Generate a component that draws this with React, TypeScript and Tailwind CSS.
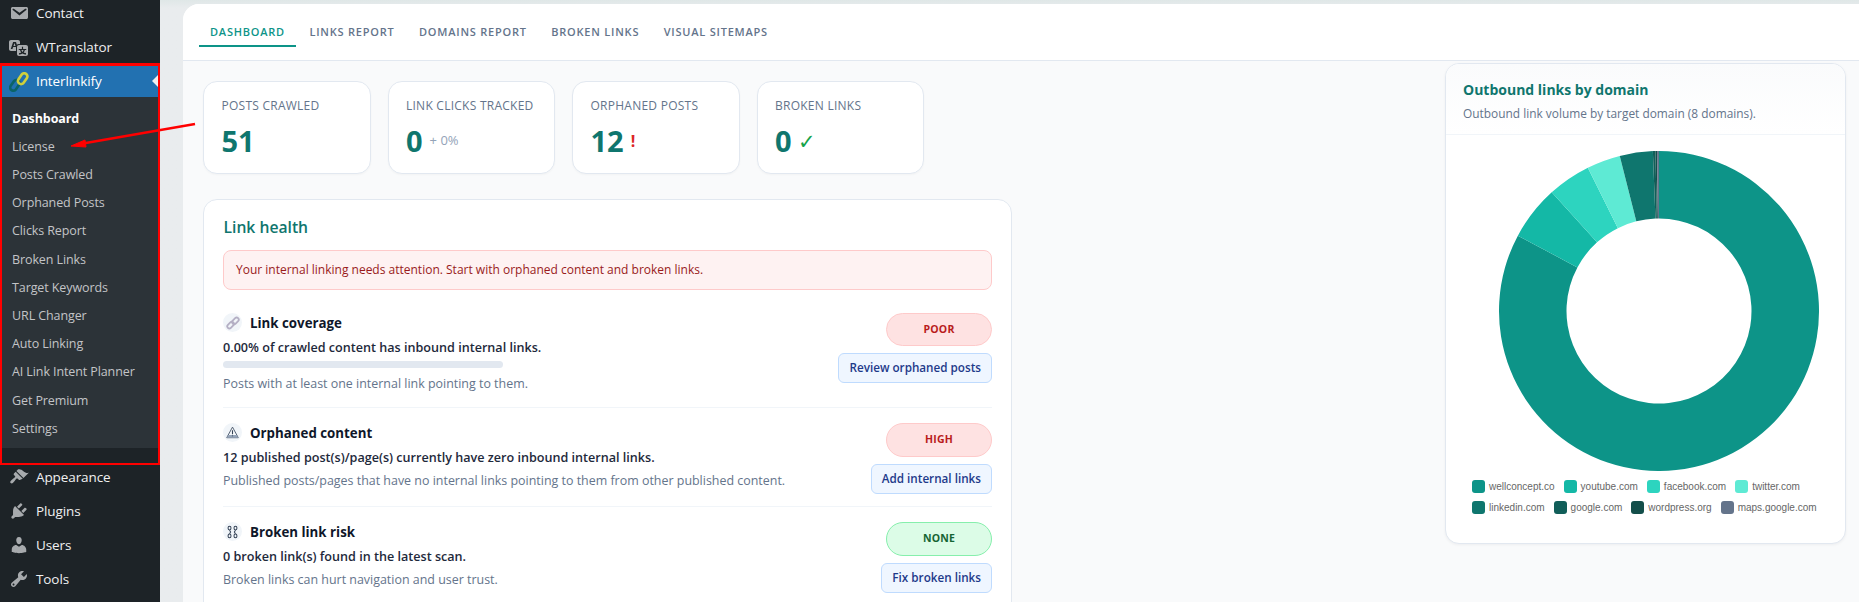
import React from "react";

const FONT = '"Open Sans","Noto Sans",sans-serif';

const Dash = ({ d, className = "" }: { d: string; className?: string }) => (
  <svg viewBox="0 0 20 20" width="20" height="20" className={"fill-[#a7aaad] " + className}>
    <path d={d} />
  </svg>
);

const ICONS = {
  mail: "M3.87 4h13.25C18.37 4 19 4.59 19 5.79v8.42c0 1.19-.63 1.79-1.88 1.79H3.87c-1.25 0-1.88-.6-1.88-1.79V5.79c0-1.2.63-1.79 1.88-1.79zm6.62 8.6l6.74-5.53c.24-.2.43-.66.13-1.07-.29-.41-.82-.42-1.17-.17l-5.7 3.86L4.8 5.83c-.35-.25-.88-.24-1.17.17-.3.41-.11.87.13 1.07z",
  translate: "M11 7H9.49c-.63 0-1.25.3-1.59.7L7 5H4.13l-2.39 7h1.69l.74-2H7v4H2c-1.1 0-2-.9-2-2V5c0-1.1.9-2 2-2h7c1.1 0 2 .9 2 2v2zM6.51 9H4.49l1-2.93zM10 8h7c1.1 0 2 .9 2 2v7c0 1.1-.9 2-2 2h-7c-1.1 0-2-.9-2-2v-7c0-1.1.9-2 2-2zm7.25 5v-1.08h-3.17V9.75h-1.16v2.17H9.75V13h1.28c.11.85.56 1.85 1.28 2.62-.87.36-1.89.62-2.31.62-.01.02.22.97.2 1.46.84 0 2.21-.5 3.28-1.15 1.09.65 2.48 1.15 3.34 1.15-.02-.49.2-1.44.2-1.46-.43 0-1.49-.26-2.38-.63.7-.77 1.14-1.77 1.25-2.61h1.36zm-3.81 1.93c-.5-.46-.85-1.13-1.01-1.93h2.09c-.17.8-.51 1.47-1 1.93l-.04.03s-.03-.02-.04-.03z",
  brush: "M14.48 11.06L7.41 3.99l1.5-1.5c.5-.56 2.3-.47 3.51.32 1.21.8 1.43 1.28 2.91 2.1 1.18.64 2.45 1.26 4.45.85zm-.71.71L6.7 4.7 4.93 6.47c-.39.39-.39 1.02 0 1.41l1.06 1.06c.39.39.39 1.03 0 1.42-.6.6-1.43 1.11-2.21 1.7-.79.59-1.48 1.23-2.08 1.82-.59.59-.59 1.54 0 2.12.59.59 1.54.59 2.12 0 .6-.6 1.23-1.3 1.82-2.08.59-.78 1.1-1.61 1.7-2.21.39-.39 1.03-.39 1.42 0l1.06 1.06c.39.39 1.02.39 1.41 0z",
  plug: "M13.11 4.36L9.87 7.6 8 5.73l3.24-3.24c.35-.34 1.05-.2 1.56.32.52.51.66 1.21.31 1.55zm-8 1.77l.91-1.12 9.01 9.01-1.19.84c-.71.71-2.63 1.16-3.82 1.16H6.14L4.9 17.26c-.59.59-1.54.59-2.12 0-.59-.58-.59-1.53 0-2.12l1.24-1.24v-3.88c0-1.13.4-3.19 1.09-3.89zm7.26 3.97l3.24-3.24c.34-.35 1.04-.21 1.55.31.52.51.66 1.21.31 1.55l-3.24 3.25z",
  user: "M10 9.25c-2.27 0-2.73-3.44-2.73-3.44C7 4.02 7.82 2 9.97 2c2.16 0 2.98 2.02 2.71 3.81 0 0-.41 3.44-2.68 3.44zm0 2.57L12.72 10c2.39 0 4.52 2.33 4.52 4.53v2.49s-3.65 1.13-7.24 1.13c-3.65 0-7.24-1.13-7.24-1.13v-2.49c0-2.25 1.94-4.48 4.47-4.48z",
  tools: "M16.68 9.77c-1.34 1.34-3.3 1.67-4.95.99l-5.41 6.52c-.99.99-2.59.99-3.58 0s-.99-2.59 0-3.57l6.52-5.42c-.68-1.65-.35-3.61.99-4.95 1.28-1.28 3.12-1.62 4.72-1.06l-2.89 2.89 2.82 2.82 2.86-2.87c.53 1.58.18 3.39-1.08 4.65zM3.81 16.21c.4.39 1.04.39 1.43 0 .4-.4.4-1.04 0-1.43-.39-.4-1.03-.4-1.43 0-.39.39-.39 1.03 0 1.43z",
};

const NavItem = ({ icon, label }: { icon: string; label: string }) => (
  <div className="flex h-[34px] items-center">
    <div className="flex w-[36px] justify-center pl-[1px]">
      <Dash d={icon} />
    </div>
    <span className="text-[13.5px] tracking-[-0.1px] text-[#f0f0f1]">{label}</span>
  </div>
);

const SUB = ["Dashboard","License","Posts Crawled","Orphaned Posts","Clicks Report","Broken Links","Target Keywords","URL Changer","Auto Linking","AI Link Intent Planner","Get Premium","Settings"];

const Sidebar = () => (
  <aside className="relative z-10 flex h-[602px] w-[160px] shrink-0 flex-col overflow-hidden bg-[#1d2327]">
    <div className="-mt-[4px]">
      <NavItem icon={ICONS.mail} label="Contact" />
      <NavItem icon={ICONS.translate} label="WTranslator" />
    </div>
    <div className="mt-[-1px] flex h-[402px] shrink-0 flex-col border-[2px] border-t-[3px] border-[#ff0000]">
      <div className="relative flex h-[31px] items-center bg-[#2271b1]">
        <div className="flex w-[34px] justify-center">
          <svg viewBox="0 0 18 18" width="20" height="20">
            <g fill="none" strokeWidth="2.4">
              <rect x="0" y="9.2" width="10.6" height="5.6" rx="2.8" transform="rotate(-55 5.3 12)" stroke="#0b6467" />
              <rect x="7" y="3.2" width="10.6" height="5.6" rx="2.8" transform="rotate(-55 12.3 6)" stroke="#cfd03c" />
            </g>
          </svg>
        </div>
        <span className="text-[13.5px] tracking-[-0.1px] text-white">Interlinkify</span>
        <div className="absolute right-0 top-[9px] h-0 w-0 border-y-[6px] border-r-[6px] border-y-transparent border-r-[#f0f0f1]" />
      </div>
      <div className="flex h-[351px] flex-col bg-[#2c3338] pt-[8px]">
        {SUB.map((s, i) => (
          <div key={s} className={"flex h-[28.2px] items-center pl-[10px] text-[12.5px] tracking-[-0.1px] " + (i === 0 ? "font-bold text-white" : "text-[#c3c4c7]")}>
            {s}
          </div>
        ))}
      </div>
    </div>
    <div className="-mt-[5px]">
      <NavItem icon={ICONS.brush} label="Appearance" />
      <NavItem icon={ICONS.plug} label="Plugins" />
      <NavItem icon={ICONS.user} label="Users" />
      <NavItem icon={ICONS.tools} label="Tools" />
    </div>
  </aside>
);

const TABS = ["DASHBOARD","LINKS REPORT","DOMAINS REPORT","BROKEN LINKS","VISUAL SITEMAPS"];

const Stat = ({ label, value, extra }: { label: string; value: string; extra?: React.ReactNode }) => (
  <div className="h-[93px] w-[167.5px] rounded-[14px] border border-[#e2e8f0] bg-white pl-[17.5px] pt-[15px] shadow-[0_1px_2px_rgba(15,23,42,0.03)]">
    <div className="text-[12px] leading-[18px] tracking-[0.25px] text-[#64748b]">{label}</div>
    <div className="mt-[8px] flex items-center gap-[6px]">
      <span className="text-[29px] font-bold leading-[36px] text-[#0f766e]">{value}</span>
      {extra}
    </div>
  </div>
);

const LinkIcon = () => (
  <svg viewBox="0 0 14 14" width="14" height="14" fill="none" stroke="#b4afc4" strokeWidth="1.8">
    <rect x="0.8" y="7" width="7.6" height="4.2" rx="2.1" transform="rotate(-45 4.6 9.1)" />
    <rect x="5.6" y="2.8" width="7.6" height="4.2" rx="2.1" transform="rotate(-45 9.4 4.9)" />
  </svg>
);
const WarnIcon = () => (
  <svg viewBox="0 0 14 14" width="13" height="13">
    <path d="M7 1.2 13.2 12.6H.8Z" fill="#f8fafc" stroke="#475569" strokeWidth="1" strokeLinejoin="round" />
    <path d="M.8 12.6 2.6 9.8H11.4L13.2 12.6Z" fill="#94a3b8" />
    <path d="M7 4.6V9M7 10.1V11" stroke="#334155" strokeWidth="1.2" />
  </svg>
);
const ChainIcon = () => (
  <svg viewBox="0 0 14 14" width="13" height="14" fill="none" stroke="#334155" strokeWidth="1.1">
    <ellipse cx="3.8" cy="2.8" rx="1.6" ry="2" />
    <ellipse cx="10.2" cy="2.8" rx="1.6" ry="2" />
    <path d="M3.8 5 5 7 3.8 9M10.2 5 9 7l1.2 2" />
    <ellipse cx="3.8" cy="11.2" rx="1.6" ry="2" />
    <ellipse cx="10.2" cy="11.2" rx="1.6" ry="2" />
  </svg>
);

type Row = {
  icon: React.ReactNode; title: string; text: string; sub: string; pill: string; btn: string;
  tone: "red" | "green"; bar?: boolean; pillH: string; rowH: string;
};

const ROWS: Row[] = [
  { icon: <LinkIcon />, title: "Link coverage", text: "0.00% of crawled content has inbound internal links.", sub: "Posts with at least one internal link pointing to them.", pill: "POOR", btn: "Review orphaned posts", tone: "red", bar: true, pillH: "h-[33px]", rowH: "h-[110px]" },
  { icon: <WarnIcon />, title: "Orphaned content", text: "12 published post(s)/page(s) currently have zero inbound internal links.", sub: "Published posts/pages that have no internal links pointing to them from other published content.", pill: "HIGH", btn: "Add internal links", tone: "red", pillH: "h-[34px]", rowH: "h-[99px]" },
  { icon: <ChainIcon />, title: "Broken link risk", text: "0 broken link(s) found in the latest scan.", sub: "Broken links can hurt navigation and user trust.", pill: "NONE", btn: "Fix broken links", tone: "green", pillH: "h-[34px]", rowH: "h-[99px]" },
];

const HealthRow = ({ r, last }: { r: Row; last: boolean }) => (
  <div className={"flex justify-between pt-[15px] " + (last ? "" : "border-b border-[#f1f5f9] ") + r.rowH}>
    <div className="min-w-0">
      <div className="flex h-[19px] items-center gap-[8px]">
        <span className="flex h-[19px] w-[19px] items-center justify-center rounded-full bg-[#f1f5f9]">{r.icon}</span>
        <span className="text-[13.3px] font-bold leading-[18px] text-[#0f172a]">{r.title}</span>
      </div>
      <div className="mt-[7px] text-[12.6px] font-semibold leading-[18px] text-[#1e293b]">{r.text}</div>
      {r.bar && <div className="mt-[4px] h-[7px] w-[280px] rounded-full bg-[#e2e8f0]" />}
      <div className={(r.bar ? "mt-[7px]" : "mt-[5px]") + " text-[12.45px] leading-[18px] text-[#64748b]"}>{r.sub}</div>
    </div>
    <div className="flex flex-col items-end gap-[7px]">
      <div className={"flex w-[106px] items-center justify-center rounded-full border text-[10.5px] font-bold tracking-[0.2px] " + r.pillH + " " + (r.tone === "red" ? "border-[#fecaca] bg-[#fee2e2] text-[#b91c1c]" : "border-[#86efac] bg-[#dcfce7] text-[#166534]")}>
        {r.pill}
      </div>
      <div className="flex h-[30px] items-center rounded-[6px] border border-[#bfdbfe] bg-[#eff6ff] px-[10px] text-[11.7px] font-semibold text-[#1e3a8a]">
        {r.btn}
      </div>
    </div>
  </div>
);

const SEGS = [
  { c: "#0d9488", from: 0, to: 298.1 },
  { c: "#14b8a6", from: 298.1, to: 317.9 },
  { c: "#2dd4bf", from: 317.9, to: 333.6 },
  { c: "#5eead4", from: 333.6, to: 345.8 },
  { c: "#0f766e", from: 345.8, to: 357.8 },
  { c: "#115e59", from: 357.8, to: 358.7 },
  { c: "#134e4a", from: 358.7, to: 359.3 },
  { c: "#64748b", from: 359.3, to: 360 },
];

const arc = (a0: number, a1: number) => {
  const R = 160, r = 92.5;
  const p = (rad: number, a: number) => {
    const t = ((a - 90) * Math.PI) / 180;
    return `${(rad * Math.cos(t)).toFixed(2)} ${(rad * Math.sin(t)).toFixed(2)}`;
  };
  const large = a1 - a0 > 180 ? 1 : 0;
  return `M${p(R, a0)}A${R} ${R} 0 ${large} 1 ${p(R, a1)}L${p(r, a1)}A${r} ${r} 0 ${large} 0 ${p(r, a0)}Z`;
};

const LEGEND = [
  [["wellconcept.co", "#0d9488"], ["youtube.com", "#14b8a6"], ["facebook.com", "#2dd4bf"], ["twitter.com", "#5eead4"]],
  [["linkedin.com", "#0f766e"], ["google.com", "#115e59"], ["wordpress.org", "#134e4a"], ["maps.google.com", "#64748b"]],
];

const ChartCard = () => (
  <div className="h-[481px] w-[401px] overflow-hidden rounded-[14px] border border-[#e2e8f0] bg-white shadow-[0_1px_3px_rgba(15,23,42,0.05)]">
    <div className="h-[71px] border-b border-[#f1f5f9] bg-gradient-to-b from-[#fafbfc] to-white pl-[17px] pt-[16px]">
      <div className="text-[14px] font-bold leading-[20px] text-[#0f766e]">Outbound links by domain</div>
      <div className="mt-[4px] text-[11.9px] leading-[18px] text-[#64748b]">Outbound link volume by target domain (8 domains).</div>
    </div>
    <div className="flex justify-center pl-[26px] pt-[16px]">
      <svg viewBox="-160 -160 320 320" width="320" height="320">
        {SEGS.map((s) => <path key={s.c} d={arc(s.from, s.to)} fill={s.c} />)}
      </svg>
    </div>
    <div className="mt-[9px] flex flex-col gap-[8px] pl-[26px]" style={{ fontFamily: '"Liberation Sans",sans-serif' }}>
      {LEGEND.map((row, i) => (
        <div key={i} className="flex h-[13px] gap-[9px] text-[10px] text-[#666666]">
          {row.map(([name, c]) => (
            <div key={name} className="flex items-center gap-[4px]">
              <span className="h-[13px] w-[13px] rounded-[3px]" style={{ background: c }} />
              <span>{name}</span>
            </div>
          ))}
        </div>
      ))}
    </div>
  </div>
);

export default function App() {
  return (
    <div className="relative flex h-[602px] w-[1859px] overflow-hidden bg-[#f0f0f1]" style={{ fontFamily: FONT }}>
      <Sidebar />
      <main className="flex min-w-0 flex-1 flex-col bg-gradient-to-b from-[#dfe7e7] to-[#e9ecee] to-[8px] pl-[23px] pt-[4px]">
        <div className="flex-1 overflow-hidden rounded-tl-[16px] bg-[#f9fafb]">
          <div className="flex h-[57px] gap-[2.5px] border-b border-[#e2e8f0] bg-white pl-[16px] pt-[18px]">
            {TABS.map((t, i) => (
              <div key={t} className={"flex h-[25px] items-start px-[11px] pt-[2px] text-[11px] font-semibold leading-[16px] tracking-[0.78px] " + (i === 0 ? "border-b-2 border-[#0d9488] text-[#0d9488]" : "text-[#64748b]")}>
                {t}
              </div>
            ))}
          </div>
          <div className="flex">
            <div className="w-[830px] shrink-0 pl-[20px] pt-[20px]">
              <div className="flex gap-[17px]">
                <Stat label="POSTS CRAWLED" value="51" />
                <Stat label="LINK CLICKS TRACKED" value="0" extra={<span className="ml-[1px] text-[13px] text-[#94a3b8]">+ 0%</span>} />
                <Stat label="ORPHANED POSTS" value="12" extra={<span className="ml-[1px] text-[16px] font-bold text-[#dc2626]">!</span>} />
                <Stat label="BROKEN LINKS" value="0" extra={<span className="text-[21px] leading-[21px] text-[#16a34a]">✓</span>} />
              </div>
              <div className="mt-[25px] h-[420px] w-[809px] rounded-[14px] border border-[#e2e8f0] bg-white px-[19px] pt-[15px]">
                <div className="pl-[0.5px] text-[15.7px] font-semibold leading-[24px] text-[#0f766e]">Link health</div>
                <div className="mt-[11px] flex h-[40px] items-center rounded-[8px] border border-[#fecaca] bg-[#fef2f2] pl-[12px] text-[12px] text-[#991b1b]">
                  Your internal linking needs attention. Start with orphaned content and broken links.
                </div>
                <div className="mt-[8px]">
                  {ROWS.map((r, i) => <HealthRow key={r.title} r={r} last={i === 2} />)}
                </div>
              </div>
            </div>
            <div className="ml-[432px] pt-[2px]">
              <ChartCard />
            </div>
          </div>
        </div>
      </main>
      <svg className="pointer-events-none absolute left-0 top-0 z-20" width="220" height="180" viewBox="0 0 220 180">
        <path d="M195 124 80 144" stroke="#ff0000" strokeWidth="2.4" />
        <path d="M71 146 85 140 86 147Z" fill="#ff0000" stroke="#ff0000" />
      </svg>
    </div>
  );
}
